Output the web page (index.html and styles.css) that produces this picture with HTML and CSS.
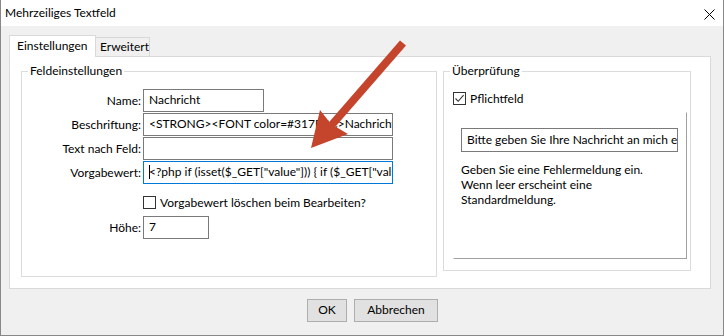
FILE: index.html
```html
<!DOCTYPE html>
<html lang="de">
<head>
<meta charset="utf-8">
<title>Mehrzeiliges Textfeld</title>
<link rel="stylesheet" href="styles.css">
</head>
<body>
<div class="window">
  <div class="titlebar">
    <span class="title">Mehrzeiliges Textfeld</span>
    <svg class="close" width="11" height="11" viewBox="0 0 11 11"><path d="M0.5 0.5 L10.5 10.5 M10.5 0.5 L0.5 10.5" stroke="#000" stroke-width="1" fill="none"/></svg>
  </div>
  <div class="body">
    <div class="tabs">
      <div class="tab active">Einstellungen</div>
      <div class="tab">Erweitert</div>
    </div>
    <div class="panel">
      <div class="group group-left">
        <div class="legend">Feldeinstellungen</div>
        <div class="form">
          <div class="row"><div class="label">Name:</div><div class="field w-name">Nachricht</div></div>
          <div class="row"><div class="label">Beschriftung:</div><div class="field w-wide">&lt;STRONG&gt;&lt;FONT color=#317B4C&gt;Nachricht&lt;/FONT&gt;&lt;/STRONG&gt;</div></div>
          <div class="row"><div class="label">Text nach Feld:</div><div class="field w-wide"></div></div>
          <div class="row"><div class="label">Vorgabewert:</div><div class="field w-wide focus"><span class="caret"></span>&lt;?php if (isset($_GET["value"])) { if ($_GET["value"] != "") echo $_GET["value"]; } ?&gt;</div></div>
          <div class="checkrow check-left"><span class="checkbox"></span><span>Vorgabewert löschen beim Bearbeiten?</span></div>
          <div class="row row-height"><div class="label">Höhe:</div><div class="field w-small">7</div></div>
        </div>
      </div>
      <div class="group group-right">
        <div class="legend">Überprüfung</div>
        <div class="checkrow check-right"><span class="checkbox checked"><svg width="11" height="11" viewBox="0 0 11 11"><path d="M1.5 5.5 L4.2 8.3 L9.6 2.2" stroke="#333" stroke-width="1.1" fill="none"/></svg></span><span>Pflichtfeld</span></div>
        <div class="sunken">
          <div class="field msg">Bitte geben Sie Ihre Nachricht an mich ein.</div>
          <div class="help">Geben Sie eine Fehlermeldung ein.<br>Wenn leer erscheint eine<br>Standardmeldung.</div>
        </div>
      </div>
    </div>
    <div class="buttons">
      <div class="btn btn-ok">OK</div>
      <div class="btn btn-cancel">Abbrechen</div>
    </div>
  </div>
  <svg class="arrow" width="724" height="336" viewBox="0 0 724 336">
    <line x1="403" y1="43" x2="330" y2="127" stroke="#c4442c" stroke-width="8" stroke-linecap="butt"/>
    <polygon points="311,148 320,110 331,124 348,134" fill="#c4442c"/>
  </svg>
</div>
</body>
</html>
```
FILE: styles.css
```css
html, body {
  margin: 0;
  padding: 0;
  background: #ffffff;
}
body {
  font-family: Lato, "Noto Sans", sans-serif;
  font-size: 12px;
  color: #000;
}
.window {
  position: relative;
  width: 724px;
  height: 336px;
  box-sizing: border-box;
  border: 1px solid #888888;
  border-top: none;
  background: #f0f0f0;
  display: flex;
  flex-direction: column;
  overflow: hidden;
}
.titlebar {
  height: 26px;
  flex: none;
  background: #ffffff;
  display: flex;
  align-items: center;
  justify-content: space-between;
  padding: 0 8px 0 4px;
}
.title {
  line-height: 16px;
}
.close {
  display: block;
  margin-top: 2px;
}
.body {
  flex: 1;
  padding: 9px 12px 0 8px;
  display: flex;
  flex-direction: column;
}
.tabs {
  position: relative;
  z-index: 1;
  display: flex;
  align-items: flex-end;
  height: 22px;
  margin-bottom: -1px;
}
.tab {
  box-sizing: border-box;
  line-height: 16px;
}
.tab.active {
  width: 87px;
  height: 22px;
  background: #ffffff;
  border: 1px solid #d9d9d9;
  border-bottom: none;
  padding: 2px 0 0 7px;
}
.tab:not(.active) {
  width: 54px;
  height: 19px;
  margin-bottom: 1px;
  background: #f0f0f0;
  border-top: 1px solid #d9d9d9;
  border-right: 1px solid #d9d9d9;
  padding: 1px 0 0 4px;
}
.panel {
  box-sizing: border-box;
  height: 233px;
  background: #ffffff;
  border: 1px solid #d9d9d9;
  padding: 14px 19px 0 11px;
  display: flex;
  align-items: flex-start;
  gap: 6px;
}
.group {
  box-sizing: border-box;
  border: 1px solid #dcdcdc;
}
.group-left {
  width: 416px;
  height: 206px;
}
.group-right {
  width: 248px;
  height: 200px;
}
.legend {
  width: max-content;
  margin: -9px 0 0 6px;
  padding: 0 2px;
  background: #ffffff;
  line-height: 16px;
}
.form {
  padding-top: 10px;
}
.row {
  display: flex;
  align-items: center;
  height: 23px;
  margin-bottom: 1px;
}
.label {
  width: 119px;
  margin-right: 2px;
  text-align: right;
  white-space: nowrap;
}
.field {
  box-sizing: border-box;
  height: 23px;
  border: 1px solid #7a7a7a;
  background: #ffffff;
  padding: 0 5px;
  line-height: 20px;
  white-space: nowrap;
  overflow: hidden;
}
.field.focus {
  border-color: #0078d7;
}
.caret {
  display: inline-block;
  width: 1px;
  height: 14px;
  background: #000;
  vertical-align: -3px;
  margin-right: -1px;
}
.w-name { width: 121px; }
.w-wide { width: 250px; }
.w-small { width: 66px; }
.checkrow {
  display: flex;
  align-items: center;
  height: 17px;
  line-height: 16px;
}
.check-left {
  margin: 10px 0 0 121px;
}
.row-height {
  margin-top: 5px;
}
.check-right {
  margin: 11px 0 0 9px;
}
.checkbox {
  box-sizing: border-box;
  width: 13px;
  height: 13px;
  border: 1px solid #333333;
  background: #ffffff;
  margin-right: 4px;
  flex: none;
  display: flex;
}
.checkbox svg {
  display: block;
}
.sunken {
  box-sizing: border-box;
  width: 234px;
  height: 147px;
  margin: 5px 0 0 9px;
  border: 1px solid;
  border-color: #ffffff #a0a0a0 #a0a0a0 #ffffff;
}
.msg {
  width: 217px;
  height: 24px;
  line-height: 21px;
  margin: 15px 0 0 7px;
}
.help {
  margin: 10px 0 0 7px;
  line-height: 15px;
}
.buttons {
  display: flex;
  gap: 7px;
  margin-top: 10px;
  padding-left: 298px;
}
.btn {
  box-sizing: border-box;
  height: 23px;
  background: #e1e1e1;
  border: 1px solid #adadad;
  text-align: center;
  line-height: 20px;
}
.btn-ok { width: 40px; }
.btn-cancel { width: 84px; }
.arrow {
  position: absolute;
  left: -1px;
  top: 0;
  pointer-events: none;
}
```
